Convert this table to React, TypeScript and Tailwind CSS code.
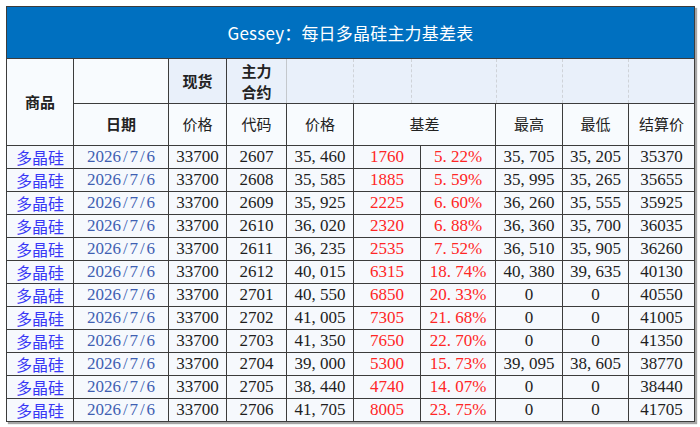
const rows = [
  ['2607', '35,460', '1760', '5.22%', '35,705', '35,205', '35370'],
  ['2608', '35,585', '1885', '5.59%', '35,995', '35,265', '35655'],
  ['2609', '35,925', '2225', '6.60%', '36,260', '35,555', '35925'],
  ['2610', '36,020', '2320', '6.88%', '36,360', '35,700', '36035'],
  ['2611', '36,235', '2535', '7.52%', '36,510', '35,905', '36260'],
  ['2612', '40,015', '6315', '18.74%', '40,380', '39,635', '40130'],
  ['2701', '40,550', '6850', '20.33%', '0', '0', '40550'],
  ['2702', '41,005', '7305', '21.68%', '0', '0', '41005'],
  ['2703', '41,350', '7650', '22.70%', '0', '0', '41350'],
  ['2704', '39,000', '5300', '15.73%', '39,095', '38,605', '38770'],
  ['2705', '38,440', '4740', '14.07%', '0', '0', '38440'],
  ['2706', '41,705', '8005', '23.75%', '0', '0', '41705'],
];

// half-width punctuation like the original sheet font
function num(s: string) {
  return s.split('').map((c, i) =>
    c === '/' ? (
      <span key={i} className="inline-block w-[0.5em] text-center">{c}</span>
    ) : c === ',' || c === '.' ? (
      <span key={i} className="inline-block w-[0.5em] text-left">{c}</span>
    ) : (
      c
    )
  );
}

const cell = 'flex items-center justify-center border-r border-[#3c3c3c] shrink-0';

export default function App() {
  return (
    <div className="bg-white w-[700px] h-[427px] pl-[6px] pt-[6px]">
      <div
        className="w-[689px] border border-b-0 border-[#3c3c3c] shadow-[2px_2px_1px_rgba(0,0,0,0.35)]"
        style={{ fontFamily: '"Liberation Serif", "Noto Sans CJK SC", serif' }}
      >
        {/* title */}
        <div
          className="h-[52px] bg-[#0070C0] border-b border-[#3c3c3c] flex items-center justify-center text-white text-[17px] tracking-[0.2px]"
          style={{ fontFamily: '"Noto Sans CJK SC", sans-serif' }}
        >
          Gessey：每日多晶硅主力基差表
        </div>

        {/* header */}
        <div
          className="flex h-[87px] text-[15px] text-[#222]"
          style={{ fontFamily: '"Noto Sans CJK SC", sans-serif' }}
        >
          <div className={`${cell} w-[67px] bg-[#F8FBFE] border-b font-bold`}>商品</div>
          <div className="flex-1 flex flex-col">
            <div className="flex h-[45px] border-b border-[#3c3c3c]">
              <div className={`${cell} w-[95px] bg-[#F8FBFE]`} />
              <div className={`${cell} w-[58px] bg-[#E9F0FA] font-bold`}>现货</div>
              <div className={`${cell} w-[60px] bg-[#E9F0FA] font-bold leading-[21px] text-center border-r-[#c4c8cc]`}>
                主力<br />合约
              </div>
              <div className="w-[67px] bg-[#E9F0FA] border-r border-dashed border-[#cfd3d8]" />
              <div className="w-[58px] bg-[#E9F0FA] border-r border-dashed border-[#cfd3d8]" />
              <div className="w-[85px] bg-[#E9F0FA] border-r border-dashed border-[#cfd3d8]" />
              <div className="w-[66px] bg-[#E9F0FA] border-r border-dashed border-[#cfd3d8]" />
              <div className="w-[66px] bg-[#E9F0FA] border-r border-dashed border-[#cfd3d8]" />
              <div className="flex-1 bg-[#E9F0FA]" />
            </div>
            <div className="flex h-[42px] border-b border-[#3c3c3c] bg-[#F8FBFE]">
              <div className={`${cell} w-[95px] font-bold`}>日期</div>
              <div className={`${cell} w-[58px]`}>价格</div>
              <div className={`${cell} w-[60px]`}>代码</div>
              <div className={`${cell} w-[67px]`}>价格</div>
              <div className={`${cell} w-[142px]`}>基差</div>
              <div className={`${cell} w-[67px]`}>最高</div>
              <div className={`${cell} w-[66px]`}>最低</div>
              <div className="flex-1 flex items-center justify-center">结算价</div>
            </div>
          </div>
        </div>

        {/* data */}
        {rows.map((r) => (
          <div key={r[0]} className="flex h-[23px] border-b border-[#3c3c3c] bg-[#F6F9FD] text-[17px] text-[#1e1e1e]">
            <div
              className={`${cell} w-[67px] text-[16px] text-[#3838f5]`}
              style={{ fontFamily: '"Noto Sans CJK SC", sans-serif' }}
            >
              多晶硅
            </div>
            <div className={`${cell} w-[95px] text-[#3f5fb2]`}>{num('2026/7/6')}</div>
            <div className={`${cell} w-[58px]`}>33700</div>
            <div className={`${cell} w-[60px]`}>{r[0]}</div>
            <div className={`${cell} w-[67px]`}>{num(r[1])}</div>
            <div className={`${cell} w-[67px] text-[#ff2626]`}>{r[2]}</div>
            <div className={`${cell} w-[75px] text-[#ff2626]`}>{num(r[3])}</div>
            <div className={`${cell} w-[67px]`}>{num(r[4])}</div>
            <div className={`${cell} w-[66px]`}>{num(r[5])}</div>
            <div className="flex-1 flex items-center justify-center">{r[6]}</div>
          </div>
        ))}
      </div>
    </div>
  );
}
